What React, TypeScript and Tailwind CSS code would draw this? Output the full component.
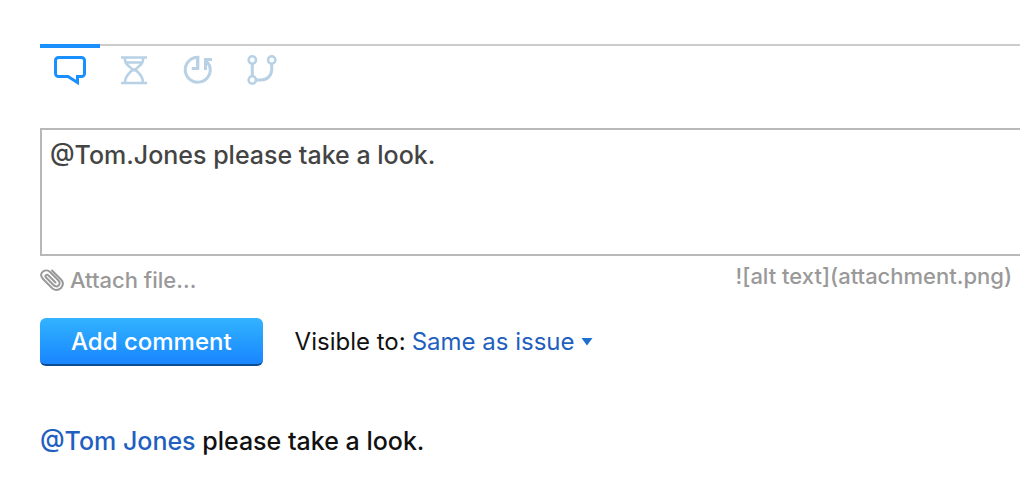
import { useState } from "react";
import type { ReactNode } from "react";

type Tab = { id: string; label: string; icon: ReactNode };

const iconProps = {
  width: 36,
  height: 32,
  viewBox: "0 0 36 32",
  fill: "none",
  stroke: "currentColor",
  strokeWidth: 3,
  "aria-hidden": true,
} as const;

const tabs: Tab[] = [
  {
    id: "comments",
    label: "Comments",
    icon: (
      <svg {...iconProps}>
        <path d="M6.5 3.5H29.5a3 3 0 0 1 3 3V19.5a3 3 0 0 1-3 3H25.5V28.500L16 22.5H6.5a3 3 0 0 1-3-3V6.500a3 3 0 0 1 3-3Z" />
      </svg>
    ),
  },
  {
    id: "work",
    label: "Work items",
    icon: (
      <svg {...iconProps} strokeWidth={2.5}>
        <path d="M5 3.500H31M5 29H31M10 8.500H26" />
        <path d="M9 4V6C9 11 15 13 16.500 15.500C15 18 9 21 9 28.500M27 4V6C27 11 21 13 19.500 15.500C21 18 27 21 27 28.500" />
        <path d="M14 13.500Q18 15 22 13.500L20 15.500L22.500 18.500Q18 16.500 13.500 18.500L16 15.500Z" fill="currentColor" stroke="none" />
      </svg>
    ),
  },
  {
    id: "history",
    label: "History",
    icon: (
      <svg {...iconProps}>
        <path d="M17.700 14.500V3.200A12.500 12.500 0 1 0 29.500 11.500L25.500 6" />
        <path d="M17.700 2V14.500H11.700M25.500 16V5.500H32" />
      </svg>
    ),
  },
  {
    id: "vcs",
    label: "VCS changes",
    icon: (
      <svg {...iconProps} strokeWidth={2.5}>
        <circle cx="8.300" cy="6" r="3.700" />
        <circle cx="27.700" cy="6" r="3.700" />
        <circle cx="8.300" cy="26" r="3.700" />
        <path d="M8.300 10V22M27.700 10V15.500C27.700 22 23 26 17 26H12" strokeWidth="3" />
      </svg>
    ),
  },
];

export default function App() {
  const [active, setActive] = useState("comments");
  const [text, setText] = useState("@Tom.Jones please take a look.");

  return (
    <main className="overflow-hidden bg-white pt-11 pl-10 font-['Inter',sans-serif] text-[25px] leading-8 font-medium text-[#111]">
      <nav aria-label="Activity" className="flex gap-1 border-t-2 border-[#ccc]">
        {tabs.map((tab) => (
          <button
            key={tab.id}
            type="button"
            aria-label={tab.label}
            aria-pressed={active === tab.id}
            onClick={() => setActive(tab.id)}
            className={
              "-mt-0.5 flex h-11 w-15 justify-center border-t-4 pt-1.5 " +
              (active === tab.id
                ? "border-[#1a90ff] text-[#1a90ff]"
                : "border-transparent text-[#b8d1e5]")
            }
          >
            {tab.icon}
          </button>
        ))}
      </nav>

      <form className="pt-10" onSubmit={(e) => e.preventDefault()}>
        <textarea
          aria-label="Comment"
          value={text}
          onChange={(e) => setText(e.target.value)}
          className="block h-32 w-full resize-none border-2 border-r-0 border-[#b8b8b8] px-2 py-[9px] text-[#444] outline-none"
        />
        <div className="flex items-start justify-between pr-2 text-[22px] leading-8 text-[#999]">
          <button type="button" className="flex items-center gap-1.5 pt-2">
            <svg width="24" height="24" viewBox="0 0 24 24" fill="none" stroke="currentColor" strokeWidth="2" strokeLinecap="round" aria-hidden="true">
              <path d="M12 2.500L21 11.500C23.500 14 23.500 17 21 20C18 22.500 15 22.500 12.500 20.500L3 11C0 8 1 5 3 3.500C5 2 8 2 10 4L18.500 12.500C20 14 20 16 18.500 17.500C17 19 15 18.500 13.500 17L6 9.500C4.500 8 6.500 5.500 8.500 7.500L15.500 14.500" />
            </svg>
            <span>Attach file...</span>
          </button>
          <span className="pt-1">![alt text](attachment.png)</span>
        </div>
        <div className="flex items-center gap-8 pt-[22px] text-[24px]">
          <button
            type="submit"
            className="h-12 rounded-md border-b-2 border-[#0d4d8f] bg-linear-to-b from-[#33b3ff] to-[#1a85ff] px-[31px] pt-px text-white"
          >
            Add comment
          </button>
          <div className="flex items-center gap-1.5 font-normal">
            <label htmlFor="visibility">Visible to:</label>
            <div className="relative flex items-center">
              <select
                id="visibility"
                className="field-sizing-content appearance-none bg-transparent pr-[18px] text-[#1f5fbf] outline-none"
              >
                <option>Same as issue</option>
              </select>
              <svg className="pointer-events-none absolute right-0" width="12" height="8" viewBox="0 0 12 8" fill="#1f6fd0" aria-hidden="true">
                <path d="M0.500 0H11.500L6 7.500Z" />
              </svg>
            </div>
          </div>
        </div>
      </form>

      <p className="pt-[59px] pb-6">
        <a href="#tom-jones" className="text-[#1f5fbf]">@Tom Jones</a> please take a look.
      </p>
    </main>
  );
}
